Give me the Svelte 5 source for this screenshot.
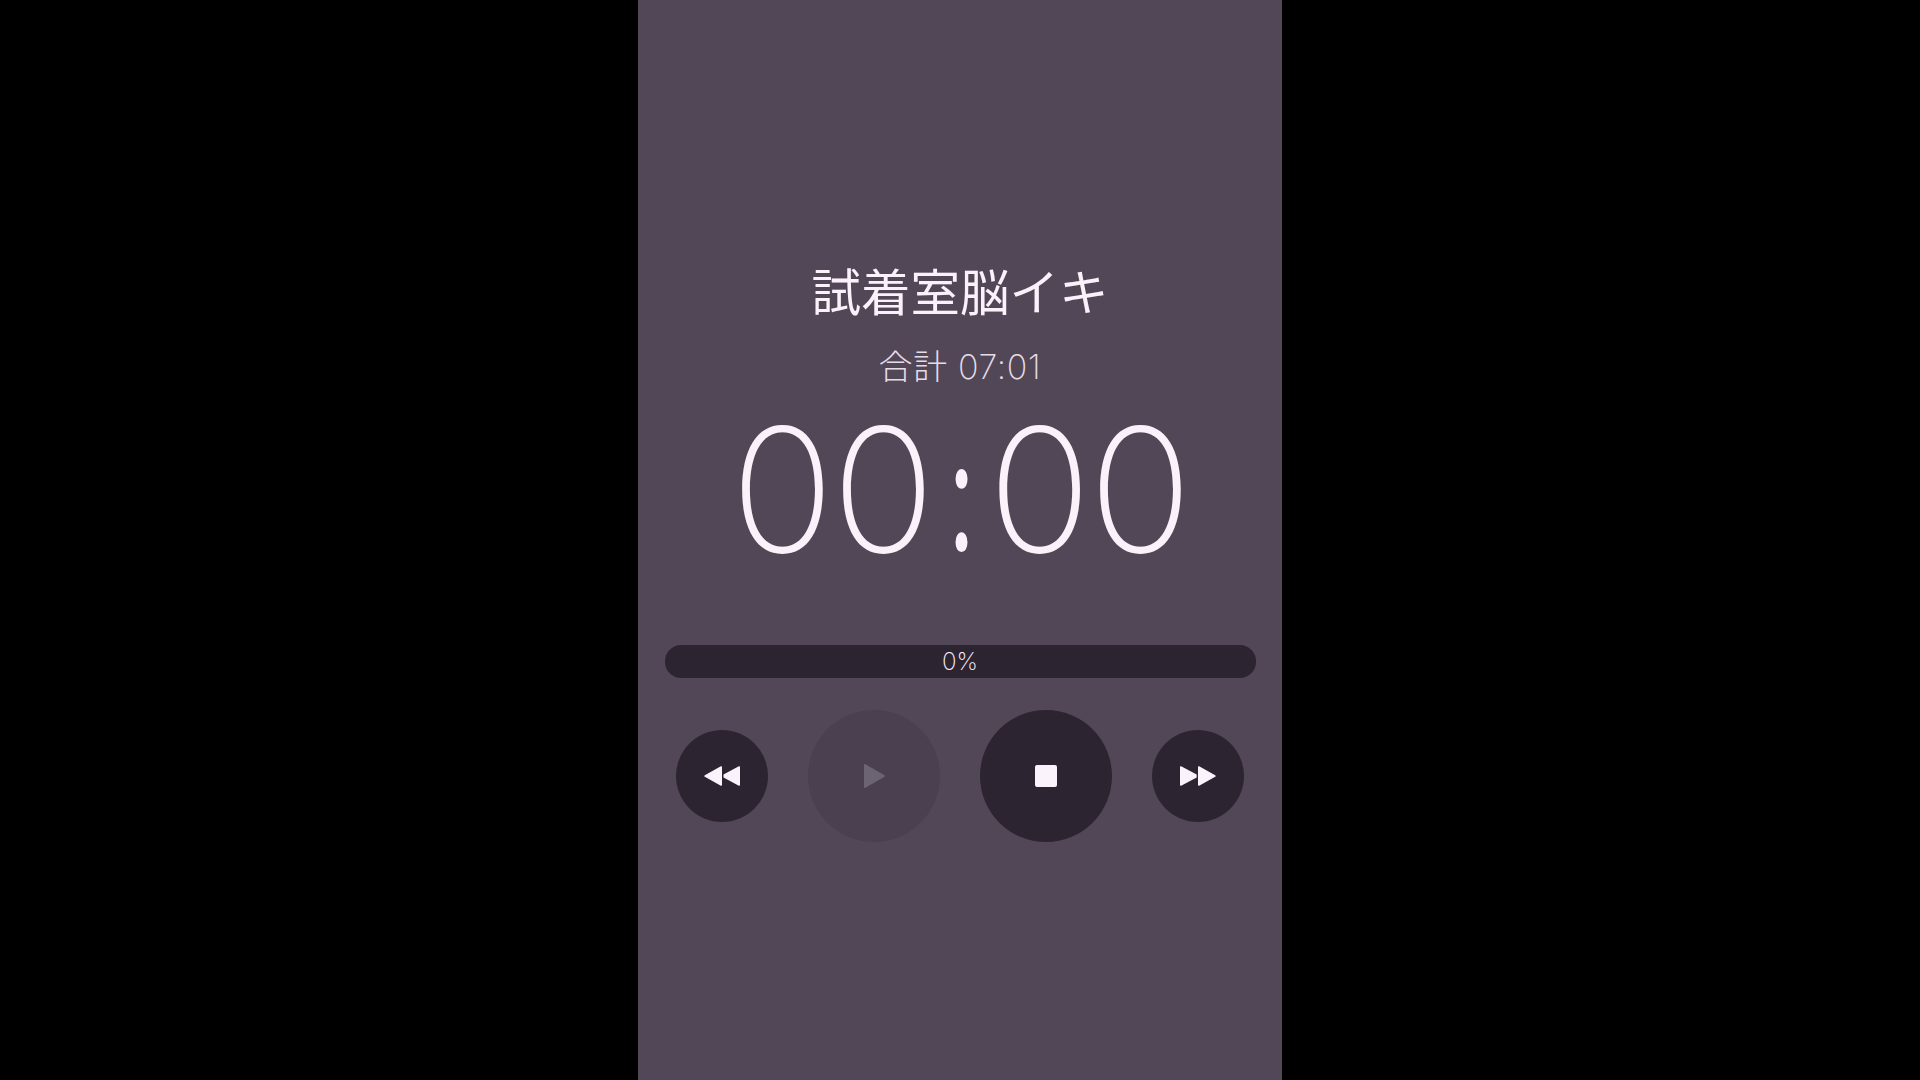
<script>
	let title = '試着室脳イキ';
	let total = '合計 07:01';
	let percent = 0;
</script>

<div class="stage">
	<main class="phone">
		<h1 class="title">{title}</h1>
		<div class="total">{total}</div>
		<div class="clock"><span>00</span><span class="colon">:</span><span>00</span></div>
		<div class="bar"><span>{percent}%</span></div>
		<div class="controls">
			<button class="btn small" aria-label="rewind">
				<svg width="36" height="20" viewBox="0 0 36 20"><path d="M18 1.2v17.6a1 1 0 0 1-1.6.8L.8 10.8a1 1 0 0 1 0-1.6L16.4.4a1 1 0 0 1 1.6.8z M36 1.2v17.6a1 1 0 0 1-1.6.8L19.5 11.4V8.6L34.4.4a1 1 0 0 1 1.6.8z" /></svg>
			</button>
			<button class="btn big disabled" aria-label="play" disabled>
				<svg width="21" height="24" viewBox="0 0 21 24"><path d="M0 1v22a1 1 0 0 0 1.5.8L20.5 12.8a1 1 0 0 0 0-1.6L1.5.2A1 1 0 0 0 0 1z" /></svg>
			</button>
			<button class="btn big" aria-label="stop">
				<svg width="22" height="22" viewBox="0 0 22 22"><rect width="22" height="22" rx="2" /></svg>
			</button>
			<button class="btn small" aria-label="fast forward">
				<svg width="36" height="20" viewBox="0 0 36 20"><path d="M0 1.2v17.6a1 1 0 0 0 1.6.8l15.1-8.2V8.6L1.6.4A1 1 0 0 0 0 1.2z M18 1.2v17.6a1 1 0 0 0 1.6.8l15.6-8.8a1 1 0 0 0 0-1.6L19.6.4A1 1 0 0 0 18 1.2z" /></svg>
			</button>
		</div>
	</main>
</div>

<style>
	:global(body) { margin: 0; background: #000; }
	.stage { height: 1080px; display: flex; justify-content: center; overflow: hidden; }
	.phone { width: 644px; height: 1080px; box-sizing: border-box; padding-top: 260px; background: #524756; color: #fbf1fb; display: flex; flex-direction: column; align-items: center; font-family: Inter, "Noto Sans CJK JP", sans-serif; }
	.title { margin: 0; font-size: 49.5px; line-height: 60px; font-weight: 400; font-family: "Noto Sans CJK JP", sans-serif; }
	.total { margin-top: 27px; font-size: 34px; line-height: 40px; font-weight: 200; letter-spacing: 0.6px; color: #e6dce8; }
	.clock { margin-top: 22px; height: 160px; line-height: 160px; font-size: 172px; font-weight: 200; display: flex; justify-content: center; letter-spacing: -3px; }
	.colon { display: inline-block; font-family: Roboto, sans-serif; font-weight: 500; letter-spacing: 0; margin: 0 3px 0 7px; transform: translateY(10px) scale(0.5, 0.88); }
	.bar { margin-top: 76px; width: 591px; height: 33px; border-radius: 16px; background: #2d2431; text-align: center; font-size: 24px; line-height: 33px; font-weight: 200; }
	.controls { margin-top: 32px; width: 100%; box-sizing: border-box; padding: 0 38px; display: flex; justify-content: space-between; align-items: center; }
	.btn { padding: 0; border: none; border-radius: 50%; background: #2d2431; display: flex; align-items: center; justify-content: center; }
	.btn svg { fill: #fbf3fc; }
	.small { width: 92px; height: 92px; }
	.big { width: 132px; height: 132px; }
	.disabled { background: #4a404f; }
	.disabled svg { fill: #6d6473; }
</style>
